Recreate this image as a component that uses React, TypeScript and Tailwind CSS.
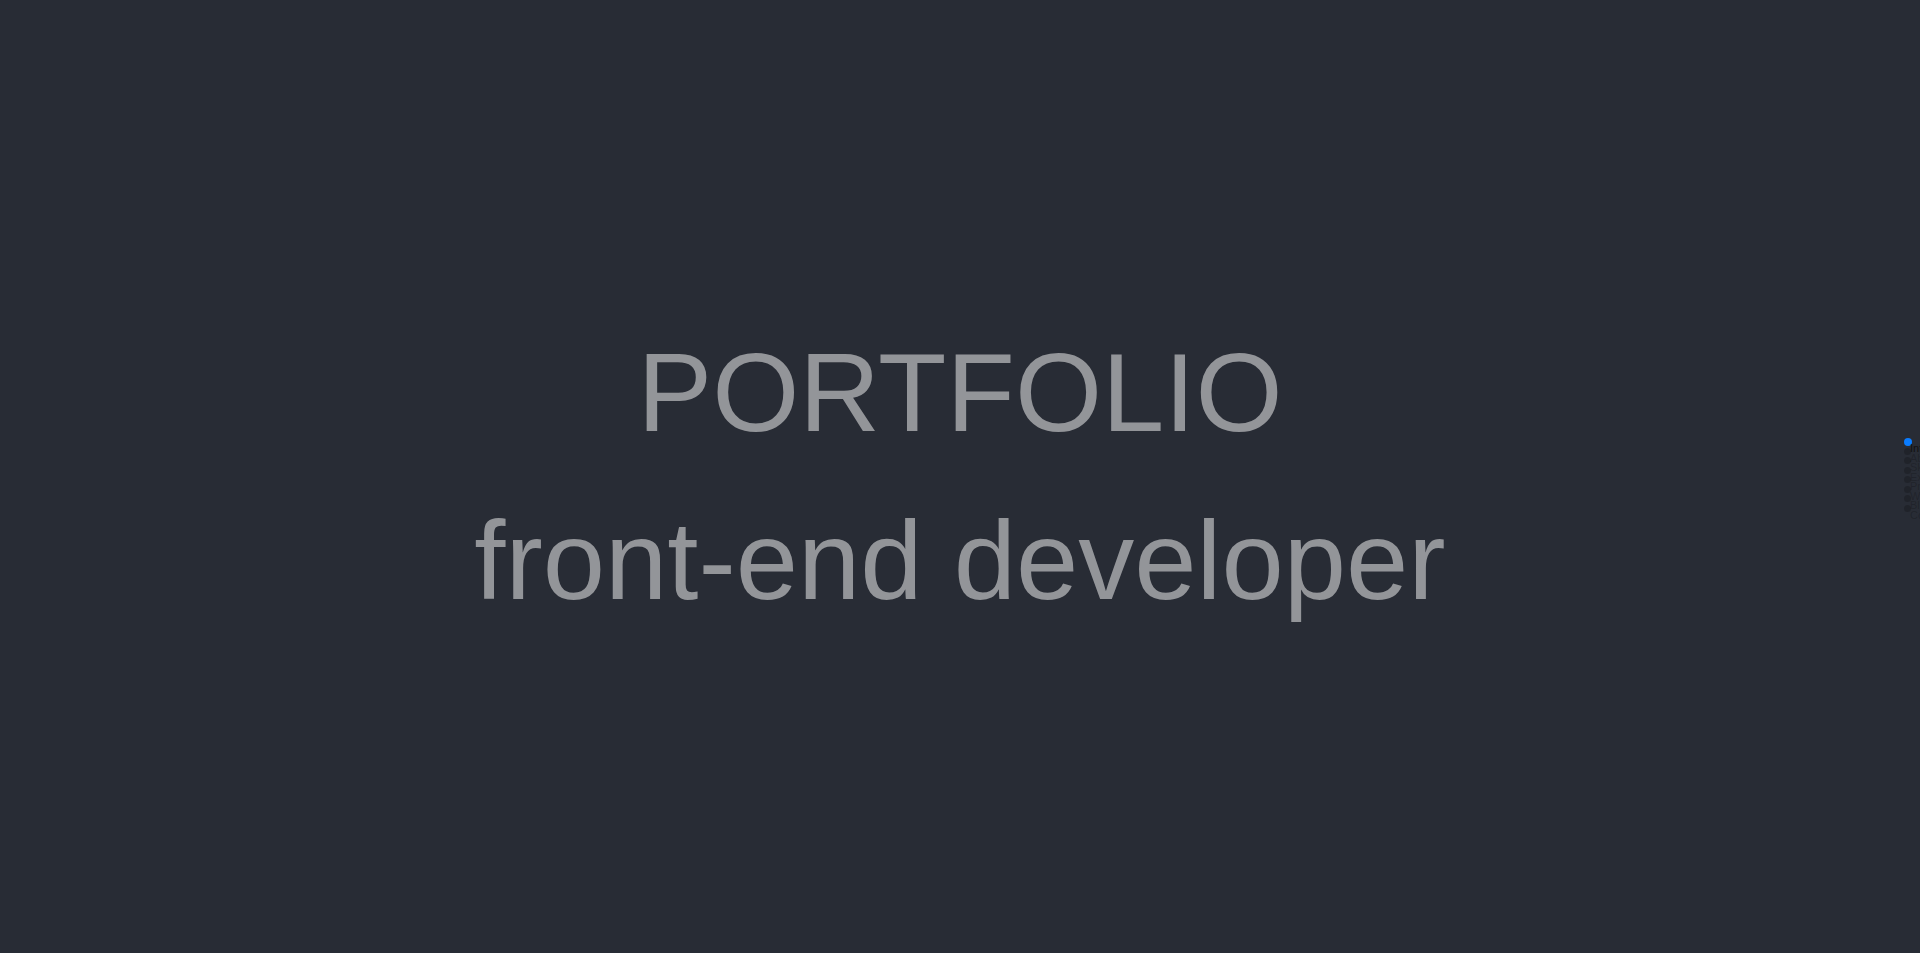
const sections = ['Intro', 'About', 'Skills', 'Experience', 'Projects', 'Work', 'Blog', 'Contact'];

export default function App() {
  return (
    <div className="relative h-[953px] w-full overflow-hidden bg-[#282c35] font-['Liberation_Sans',Arial,sans-serif]">
      {/* hero */}
      <div className="flex h-full flex-col items-center justify-center text-center text-[112px] leading-[1.5] text-[#939599]">
        <h1 className="font-normal">PORTFOLIO</h1>
        <h2 className="font-normal">front-end developer</h2>
      </div>

      {/* side nav, mostly off-screen */}
      <nav className="absolute left-[1900px] top-[438px] w-[20px] overflow-hidden">
        <ul className="flex flex-col pb-[8px]">
          {sections.map((s, i) => (
            <li key={s} className="relative h-[9.5px]">
              <span
                className={
                  i === 0
                    ? 'absolute left-[4px] top-0 h-[8px] w-[8px] rounded-full bg-[#0a7cff]'
                    : 'absolute left-[4px] top-0 h-[7px] w-[7px] rounded-full bg-black/20'
                }
              ></span>
              <span
                className={
                  i === 0
                    ? 'absolute left-[10px] top-[6px] whitespace-nowrap text-[11px] leading-[9.5px] text-[#111]'
                    : 'absolute left-[10px] top-[6px] whitespace-nowrap text-[11px] leading-[9.5px] text-black/20'
                }
              >
                {s}
              </span>
            </li>
          ))}
        </ul>
      </nav>
    </div>
  );
}
